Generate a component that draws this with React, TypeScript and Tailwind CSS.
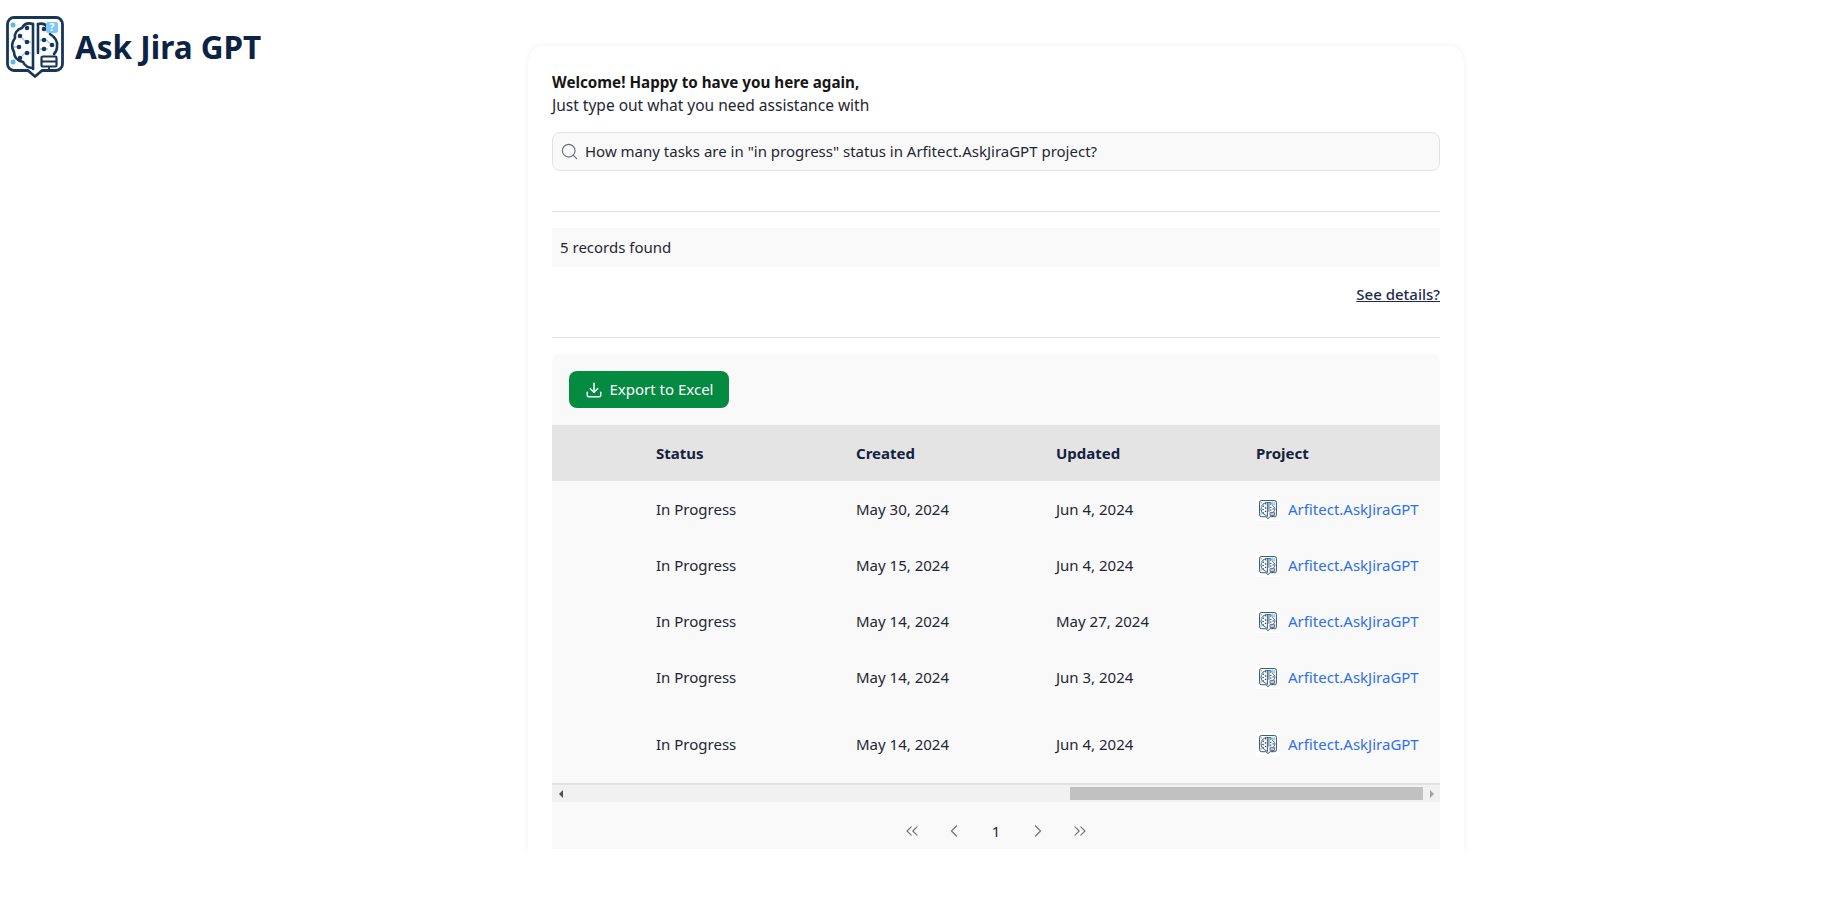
import {
  ChevronLeft,
  ChevronRight,
  ChevronsLeft,
  ChevronsRight,
  Download,
  Search,
} from "lucide-react";

const rows = [
  { status: "In Progress", created: "May 30, 2024", updated: "Jun 4, 2024", height: "h-14" },
  { status: "In Progress", created: "May 15, 2024", updated: "Jun 4, 2024", height: "h-14" },
  { status: "In Progress", created: "May 14, 2024", updated: "May 27, 2024", height: "h-14" },
  { status: "In Progress", created: "May 14, 2024", updated: "Jun 3, 2024", height: "h-14" },
  { status: "In Progress", created: "May 14, 2024", updated: "Jun 4, 2024", height: "h-[78px]" },
];

function Logo({ className }: { className?: string }) {
  return (
    <svg viewBox="0 0 58 62" fill="none" className={className}>
      <path
        d="M8 1.500h42a6.500 6.500 0 0 1 6.500 6.500v40a6.500 6.500 0 0 1-6.500 6.500H36L29 60.500l-7-6H8A6.500 6.500 0 0 1 1.500 48V8A6.500 6.500 0 0 1 8 1.500z"
        stroke="#16365a"
        strokeWidth="2.800"
        strokeLinejoin="round"
      />
      <g stroke="#8ccdf2" strokeWidth="1.300">
        <path d="M7 31h7M14 20l6 6h5M14 42l5-5h6M34 24h6l6 5M34 33h8" />
      </g>
      <g stroke="#16365a" strokeWidth="2.600" strokeLinecap="round">
        <path d="M27 8v45M32 8v29" />
        <path d="M27 8c-5-1.500-9 0-11 4-5 1-8 6-7 10-3 4-4 9-1 14 0 6 5 9 9 10 2 4 6 6 10 6" />
        <path d="M32 8c5-1 8 1 9 3M44 18c5 3 8 8 7 13 0 2-1 5-3 7" />
      </g>
      <g fill="#16365a">
        <circle cx="21" cy="12" r="2.300" />
        <circle cx="14" cy="20" r="2.300" />
        <circle cx="21" cy="26" r="2.300" />
        <circle cx="14" cy="42" r="2.300" />
        <circle cx="21" cy="37" r="2.300" />
        <circle cx="13" cy="31" r="2.300" />
        <circle cx="38" cy="13" r="2.300" />
        <circle cx="38" cy="24" r="2.300" />
        <circle cx="46" cy="29" r="2.300" />
        <circle cx="38" cy="33" r="2.300" />
      </g>
      <circle cx="7" cy="9" r="2.500" fill="#5bb8ee" />
      <circle cx="7" cy="46" r="2.500" fill="#5bb8ee" />
      <rect x="40" y="6" width="12" height="11" rx="2" fill="#7cc9f7" />
      <text x="46" y="15" textAnchor="middle" fontSize="10" fontWeight="700" fill="#ffffff" fontFamily="Noto Sans, sans-serif">
        ?
      </text>
      <rect x="35.500" y="40.500" width="15" height="10" rx="1.200" fill="#ffffff" stroke="#16365a" strokeWidth="2.200" />
      <path d="M36 45.500h14M43 51v4" stroke="#16365a" strokeWidth="1.800" />
    </svg>
  );
}

export default function App() {
  return (
    <div className="flex h-[900px] w-full items-start overflow-hidden bg-white font-['Noto_Sans',sans-serif] text-[15px] text-[#1f2733]">
      <header className="flex w-[520px] shrink-0 items-center gap-[11px] pl-[6px] pt-4">
        <Logo className="h-[62px] w-[58px]" />
        <h1 className="pb-[1px] text-[31.500px] font-bold leading-none text-[#0d2344]">Ask Jira GPT</h1>
      </header>

      {/* card runs past the bottom of the visible area, so it is cut off flat */}
      <div className="h-[849px] w-[952px] overflow-hidden px-2 pt-[46px]">
        <main className="flex h-[840px] flex-col rounded-t-2xl bg-white px-6 pt-[25px] shadow-[0_0_6px_rgba(0,0,0,0.06)]">
          <p className="text-[15.200px] font-bold leading-[23px] text-[#161616]">Welcome! Happy to have you here again,</p>
          <p className="text-[15.500px] leading-[23px]">Just type out what you need assistance with</p>

          <div className="mt-[15px] flex h-[39px] items-center gap-[6px] rounded-lg border border-[#e3e3e3] bg-[#f9f9f9] pl-[7px]">
            <Search className="size-[19px] text-[#6b7280]" strokeWidth={1.500} />
            <span>How many tasks are in "in progress" status in Arfitect.AskJiraGPT project?</span>
          </div>

          <hr className="mt-10 border-[#e3e3e3]" />

          <div className="mt-4 flex h-[39px] items-center bg-[#f9f9f9] px-2">5 records found</div>

          <div className="mt-4 flex justify-end">
            <a className="font-medium leading-[23px] text-[#1c2b4a] underline">See details?</a>
          </div>

          <hr className="mt-[31px] border-[#e3e3e3]" />

          <section className="mt-4 flex flex-1 flex-col rounded-t-lg bg-[#f9f9f9]">
            <div className="px-[17px] pt-[17px]">
              <button className="flex h-[37px] w-[160px] items-center justify-center gap-[7px] rounded-lg bg-[#058a42] text-white">
                <Download className="size-[18px]" strokeWidth={2} />
                Export to Excel
              </button>
            </div>

            <div className="mt-[17px] grid h-14 grid-cols-[88px_200px_200px_200px_200px] items-center bg-[#e4e4e4] font-bold text-[#14223f]">
              <div />
              <div className="pl-4">Status</div>
              <div className="pl-4">Created</div>
              <div className="pl-4">Updated</div>
              <div className="pl-4">Project</div>
            </div>

            {rows.map((row, i) => (
              <div key={i} className={`grid grid-cols-[88px_200px_200px_200px_200px] items-center ${row.height}`}>
                <div />
                <div className="pl-4">{row.status}</div>
                <div className="pl-4">{row.created}</div>
                <div className="pl-4">{row.updated}</div>
                <div className="flex items-center gap-2 pl-4 text-[#2f6fed]">
                  <span className="flex size-6 items-center justify-center bg-white">
                    <Logo className="h-[19px] w-[18px]" />
                  </span>
                  Arfitect.AskJiraGPT
                </div>
              </div>
            ))}

            {/* scrollbar, table is scrolled to its right end */}
            <div className="flex h-[19px] items-center border-t-2 border-[#dfe3e8] bg-[#f1f1f1]">
              <div className="flex w-[17px] justify-center">
                <div className="h-0 w-0 border-y-[4px] border-r-[4px] border-y-transparent border-r-[#505050]" />
              </div>
              <div className="ml-[501px] h-[13px] w-[353px] bg-[#c1c1c1]" />
              <div className="flex w-[17px] justify-center">
                <div className="h-0 w-0 border-y-[4px] border-l-[4px] border-y-transparent border-l-[#a3a3a3]" />
              </div>
            </div>

            <nav className="flex h-[47px] items-center justify-center gap-[22px] pt-[11px] text-[#7a7a7a]">
              <ChevronsLeft className="size-5" strokeWidth={1.500} />
              <ChevronLeft className="size-5" strokeWidth={1.500} />
              <span className="w-5 text-center text-[#1f2733]">1</span>
              <ChevronRight className="size-5" strokeWidth={1.500} />
              <ChevronsRight className="size-5" strokeWidth={1.500} />
            </nav>
          </section>
        </main>
      </div>
    </div>
  );
}
